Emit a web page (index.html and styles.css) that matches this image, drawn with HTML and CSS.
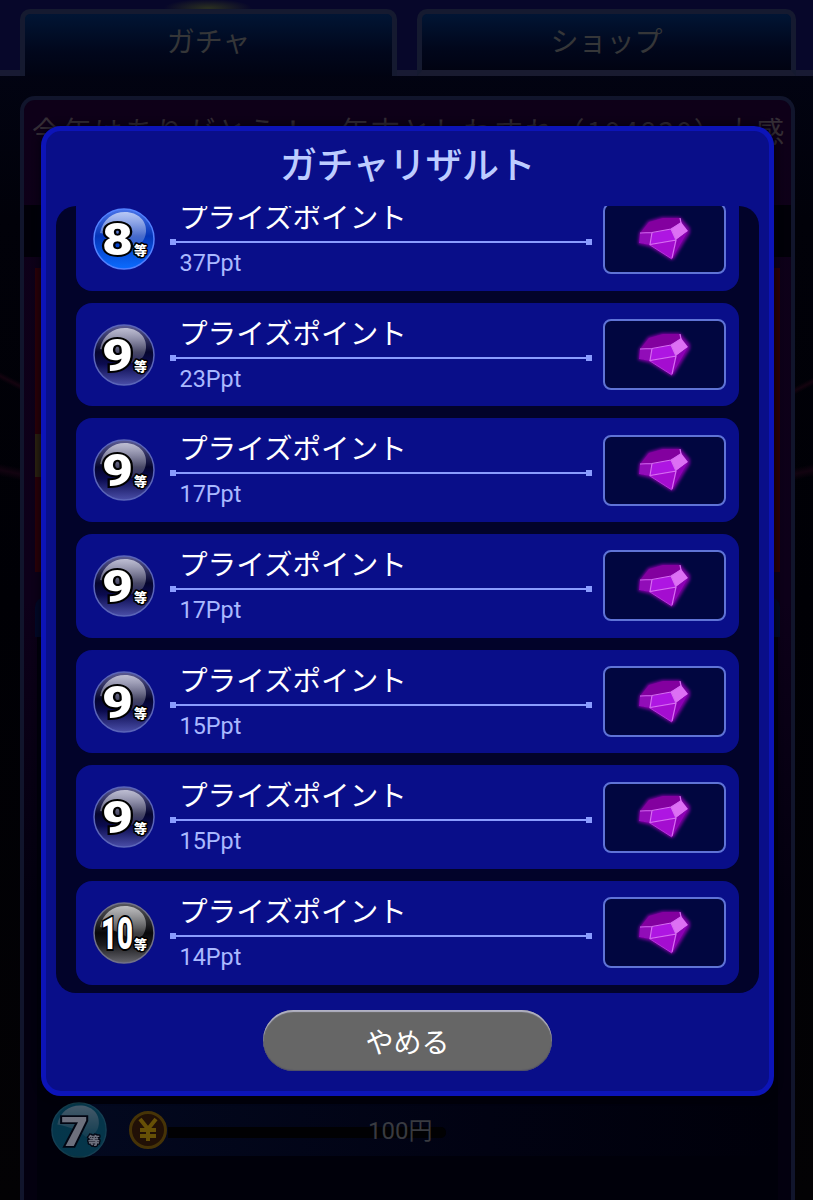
FILE: index.html
```html
<!DOCTYPE html>
<html lang="ja">
<head>
<meta charset="utf-8">
<title>ガチャリザルト</title>
<link rel="stylesheet" href="styles.css">
</head>
<body>
<svg class="defs" aria-hidden="true">
  <defs>
    <linearGradient id="shine" x1="0" y1="0" x2="0" y2="1">
      <stop offset="0" stop-color="#fff" stop-opacity=".62"/>
      <stop offset="1" stop-color="#fff" stop-opacity=".12"/>
    </linearGradient>
    <linearGradient id="disc8" x1="0" y1="0" x2="0" y2="1">
      <stop offset="0" stop-color="#4a74e8"/><stop offset=".45" stop-color="#0434b8"/><stop offset="1" stop-color="#0a6cff"/>
    </linearGradient>
    <linearGradient id="disc9" x1="0" y1="0" x2="0" y2="1">
      <stop offset="0" stop-color="#5c5c94"/><stop offset=".45" stop-color="#05052e"/><stop offset=".65" stop-color="#0b0b50"/><stop offset="1" stop-color="#4a4ea8"/>
    </linearGradient>
    <linearGradient id="disc10" x1="0" y1="0" x2="0" y2="1">
      <stop offset="0" stop-color="#5a5a60"/><stop offset=".5" stop-color="#08080a"/><stop offset=".7" stop-color="#1c1c1e"/><stop offset="1" stop-color="#66666e"/>
    </linearGradient>
    <filter id="glow" x="-20%" y="-20%" width="140%" height="140%"><feGaussianBlur stdDeviation="1.5"/></filter>
    <filter id="soft" x="-5%" y="-5%" width="110%" height="110%"><feGaussianBlur stdDeviation=".4"/></filter>
  </defs>
  <symbol id="gem" viewBox="0 0 60 50">
    <path d="M13 7 27 3 45 3 55 14 55 19 39 45 36 46 15 33 3 30 4 19Z" fill="#76009c" filter="url(#glow)"/>
    <g filter="url(#soft)">
      <path d="M14 8 28 4 45 4 46 9 36 15 17 18 6 18Z" fill="#83029f"/>
      <path d="M5 19 17 18 15 31 4 29Z" fill="#9108b8"/>
      <path d="M17 19 36 15 41 26 15 31Z" fill="#ae15e2"/>
      <path d="M36 15 46 8 53 17 41 26Z" fill="#dd70f4"/>
      <path d="M15 31 41 26 37 45Z" fill="#a407d0"/>
      <path d="M41 26 53 17 37 45Z" fill="#8c06b5"/>
      <path d="M5 19 17 18.500 36 15 46 9 45 4M17 18.500 15 30.500 41 26 36 15M41 26 37 44" fill="none" stroke="#d76cf2" stroke-width="1.2"/>
      <path d="M15 31 37 45" fill="none" stroke="#b93bdd" stroke-width=".9"/>
    </g>
  </symbol>
  <symbol id="gloss" viewBox="0 0 62 62">
    <path d="M7 25C10 11 20 4 32 4c13 0 22 9 21 20-1 9-6 14-14 15-9-8-20-12-32-14Z" fill="url(#shine)"/>
  </symbol>
</svg>

<main class="page">
  <nav class="tabs">
    <span class="tabs-edge"></span>
    <a class="tab tab-active">ガチャ</a>
    <span class="tabs-gap"></span>
    <a class="tab">ショップ</a>
    <span class="tabs-edge"></span>
  </nav>
  <section class="panel">
    <h2 class="headline">今年はありがとう！　年末としわすれ（104830）大感</h2>
    <div class="strip"></div>
    <div class="banner"><div class="banner-mark"></div></div>
    <div class="draw"></div>
    <div class="prizes">
      <div class="prize">
        <svg class="rank rank-7" viewBox="0 0 62 62"><circle class="disc" cx="31" cy="31" r="30"/><use href="#gloss"/><text class="num" x="11" y="49" textLength="30" lengthAdjust="spacingAndGlyphs">7</text><text class="suffix" x="41" y="48">等</text></svg>
        <svg class="coin" viewBox="0 0 40 40"><circle cx="20" cy="20" r="17.5" fill="#211006" stroke="#463307" stroke-width="3"/><path d="M12 9 20 19 28 9M20 18V31M12 20H28M12 26H28" fill="none" stroke="#665006" stroke-width="4"/></svg>
        <div class="meter"></div>
        <span class="cost">100円</span>
      </div>
    </div>
  </section>
</main>

<div class="overlay">
  <section class="modal">
    <h1 class="modal-title">ガチャリザルト</h1>
    <div class="list">
      <div class="items">
        <article class="card">
          <svg class="rank rank-8" viewBox="0 0 62 62"><circle class="disc" cx="31" cy="31" r="30"/><use href="#gloss"/><text class="num" x="9" y="47" textLength="31" lengthAdjust="spacingAndGlyphs">8</text><text class="suffix" x="41" y="47">等</text></svg>
          <div class="info"><p class="name">プライズポイント</p><div class="rule"></div><p class="pts">37Ppt</p></div>
          <div class="thumb"><svg class="gem"><use href="#gem"/></svg></div>
        </article>
        <article class="card">
          <svg class="rank rank-9" viewBox="0 0 62 62"><circle class="disc" cx="31" cy="31" r="30"/><use href="#gloss"/><text class="num" x="9" y="47" textLength="31" lengthAdjust="spacingAndGlyphs">9</text><text class="suffix" x="41" y="47">等</text></svg>
          <div class="info"><p class="name">プライズポイント</p><div class="rule"></div><p class="pts">23Ppt</p></div>
          <div class="thumb"><svg class="gem"><use href="#gem"/></svg></div>
        </article>
        <article class="card">
          <svg class="rank rank-9" viewBox="0 0 62 62"><circle class="disc" cx="31" cy="31" r="30"/><use href="#gloss"/><text class="num" x="9" y="47" textLength="31" lengthAdjust="spacingAndGlyphs">9</text><text class="suffix" x="41" y="47">等</text></svg>
          <div class="info"><p class="name">プライズポイント</p><div class="rule"></div><p class="pts">17Ppt</p></div>
          <div class="thumb"><svg class="gem"><use href="#gem"/></svg></div>
        </article>
        <article class="card">
          <svg class="rank rank-9" viewBox="0 0 62 62"><circle class="disc" cx="31" cy="31" r="30"/><use href="#gloss"/><text class="num" x="9" y="47" textLength="31" lengthAdjust="spacingAndGlyphs">9</text><text class="suffix" x="41" y="47">等</text></svg>
          <div class="info"><p class="name">プライズポイント</p><div class="rule"></div><p class="pts">17Ppt</p></div>
          <div class="thumb"><svg class="gem"><use href="#gem"/></svg></div>
        </article>
        <article class="card">
          <svg class="rank rank-9" viewBox="0 0 62 62"><circle class="disc" cx="31" cy="31" r="30"/><use href="#gloss"/><text class="num" x="9" y="47" textLength="31" lengthAdjust="spacingAndGlyphs">9</text><text class="suffix" x="41" y="47">等</text></svg>
          <div class="info"><p class="name">プライズポイント</p><div class="rule"></div><p class="pts">15Ppt</p></div>
          <div class="thumb"><svg class="gem"><use href="#gem"/></svg></div>
        </article>
        <article class="card">
          <svg class="rank rank-9" viewBox="0 0 62 62"><circle class="disc" cx="31" cy="31" r="30"/><use href="#gloss"/><text class="num" x="9" y="47" textLength="31" lengthAdjust="spacingAndGlyphs">9</text><text class="suffix" x="41" y="47">等</text></svg>
          <div class="info"><p class="name">プライズポイント</p><div class="rule"></div><p class="pts">15Ppt</p></div>
          <div class="thumb"><svg class="gem"><use href="#gem"/></svg></div>
        </article>
        <article class="card">
          <svg class="rank rank-10" viewBox="0 0 62 62"><circle class="disc" cx="31" cy="31" r="30"/><use href="#gloss"/><text class="num" x="8" y="47" textLength="32" lengthAdjust="spacingAndGlyphs">10</text><text class="suffix" x="41" y="47">等</text></svg>
          <div class="info"><p class="name">プライズポイント</p><div class="rule"></div><p class="pts">14Ppt</p></div>
          <div class="thumb"><svg class="gem"><use href="#gem"/></svg></div>
        </article>
      </div>
    </div>
    <button class="quit">やめる</button>
  </section>
</div>
</body>
</html>
```
FILE: styles.css
```css
* { box-sizing: border-box; }
body {
  margin: 0;
  width: 813px;
  height: 1200px;
  overflow: hidden;
  position: relative;
  background: #010107;
  font-family: Roboto, "Noto Sans CJK JP", sans-serif;
}
h1, h2, p { margin: 0; font-weight: 400; }
.defs { position: absolute; width: 0; height: 0; }

/* Dimmed page behind the dialog */
.page {
  height: 1200px;
  background:
    linear-gradient(207deg, transparent 40%, #14030f 50%, transparent 60%) 0 365px / 20px 32px no-repeat,
    linear-gradient(153deg, transparent 40%, #14030f 50%, transparent 60%) 795px 370px / 18px 32px no-repeat,
    linear-gradient(168deg, transparent 30%, #120310 50%, transparent 70%) 795px 458px / 18px 28px no-repeat,
    linear-gradient(192deg, transparent 30%, #120310 50%, transparent 70%) 0 458px / 20px 28px no-repeat,
    linear-gradient(#020416, #010109 220px, #000005 600px, #030204);
}
.tabs {
  display: flex;
  align-items: stretch;
  height: 76px;
  background:
    radial-gradient(ellipse 44px 9px at 208px 8px, #2b3020, transparent),
    #07072a;
}
.tabs-edge { flex: 0 0 20px; border-bottom: 6px solid #181a33; }
.tabs-gap { flex: 0 0 20px; border-bottom: 6px solid #181a33; }
.tab {
  flex: 0 0 377px;
  margin-top: 9px;
  border: 5px solid #151a30;
  border-bottom: 6px solid #191b30;
  border-radius: 10px 10px 0 0;
  background: linear-gradient(#011534, #01071c 60%, #010312);
  color: #353638;
  text-align: center;
  font: 400 28px/52px "Noto Sans CJK JP", sans-serif;
}
.tab + .tabs-gap + .tab { flex-basis: 379px; }
.tab-active { border-bottom: 0; }
.tabs-edge:last-child { flex-basis: 17px; }

.panel {
  margin: 20px 18px 0 20px;
  height: 1104px;
  border: 4px solid #11152c;
  border-bottom: 0;
  border-radius: 15px 15px 0 0;
  background: linear-gradient(#0e0018, #0d0019 500px, #03000f 800px);
  overflow: hidden;
}
.headline {
  height: 105px;
  padding: 7px 0 0 8px;
  white-space: nowrap;
  color: #342d35;
  font: 400 29px/46px "Noto Sans CJK JP", sans-serif;
  letter-spacing: 1.8px;
}
.strip { height: 52px; background: #010008; }
.banner {
  height: 304px;
  margin: 11px 11px 0;
  padding-top: 166px;
  background: #2c0008;
}
.banner-mark { width: 20px; height: 43px; background: #2c2210; }
.draw { height: 40px; margin: 25px 11px 0; border-radius: 10px 10px 0 0; background: #020928; }
.prizes {
  height: 563px;
  margin: 0 13px;
  padding-top: 467px;
  background: #00000a;
}
.prize {
  display: flex;
  align-items: center;
  height: 52px;
  margin-left: 14px;
  border-radius: 26px 0 0 26px;
  background: linear-gradient(90deg, #030920, #010212 60%, #00000a);
}
.prize .rank { width: 56px; height: 56px; flex: none; opacity: .42; }
.coin { width: 40px; height: 40px; margin-left: 21px; flex: none; }
.meter { width: 278px; height: 11px; margin: 4px -78px 0 0; background: #010103; border-radius: 0 5px 5px 0; flex: none; }
.cost { color: #383a40; font-size: 24px; position: relative; bottom: 2px; }

/* Result dialog */
.overlay { position: absolute; inset: 0; padding: 126px 0 0 41px; }
.modal {
  width: 733px;
  height: 970px;
  border: 5px solid #0c14b8;
  border-radius: 20px;
  background: #090e89;
  padding: 0 10px;
  box-shadow: 0 0 9px #00000c;
}
.modal-title {
  height: 75px;
  text-align: center;
  color: #bdccff;
  font: 500 37px/65px "Noto Sans CJK JP", sans-serif;
  letter-spacing: -.5px;
}
.list {
  height: 787px;
  padding: 0 20px;
  border-radius: 20px;
  background: #02032a;
  overflow: hidden;
}
.items {
  display: flex;
  flex-direction: column;
  gap: 12px;
  margin-top: -19px;
}
.card {
  display: flex;
  align-items: center;
  height: 103.7px;
  flex: none;
  padding: 0 13px 0 17px;
  border-radius: 16px;
  background: #090e89;
}
.rank { width: 62px; height: 62px; flex: none; display: block; }
.disc { stroke-width: 1.5; }
.rank-7 .disc { fill: #0a7587; stroke: #2e8b9b; }
.rank-8 .disc { fill: url(#disc8); stroke: #5281ff; }
.rank-9 .disc { fill: url(#disc9); stroke: #5b65b8; }
.rank-10 .disc { fill: url(#disc10); stroke: #717187; }
.num, .suffix {
  fill: #fff;
  stroke: #000;
  stroke-linejoin: miter;
  paint-order: stroke;
}
.num { font: 900 45px Roboto, sans-serif; stroke-width: 4px; }
.suffix { font: 900 13px "Noto Sans CJK JP", sans-serif; stroke-width: 3px; stroke-linejoin: round; }
.info { width: 422px; height: 100%; margin-left: 15px; padding-top: 9px; }
.name {
  height: 43px;
  padding-left: 9px;
  color: #fff;
  font: 400 28.6px/39px "Noto Sans CJK JP", sans-serif;
  white-space: nowrap;
}
.rule {
  height: 6px;
  background:
    linear-gradient(#8a9cff, #8a9cff) left / 6px 6px no-repeat,
    linear-gradient(#8a9cff, #8a9cff) right / 6px 6px no-repeat,
    linear-gradient(#8a9cff, #8a9cff) center / 100% 2px no-repeat;
}
.pts { padding: 4px 0 0 9.5px; color: #a9b9ff; font-size: 23.4px; line-height: 28px; }
.thumb {
  display: flex;
  align-items: center;
  justify-content: center;
  width: 123px;
  height: 71px;
  margin-left: auto;
  border: 2px solid #5f73d6;
  border-radius: 8px;
  background: #010640;
}
.gem { width: 60px; height: 50px; }
.quit {
  display: block;
  width: 289px;
  height: 61px;
  margin: 17px auto 0;
  padding: 0;
  border: 0;
  border-radius: 31px;
  background: #666;
  box-shadow: inset 0 2px 1px #b2b2c4, inset 0 -1px 1px #4f4f66;
  color: #fff;
  font: 400 28px/60px "Noto Sans CJK JP", sans-serif;
}
```
